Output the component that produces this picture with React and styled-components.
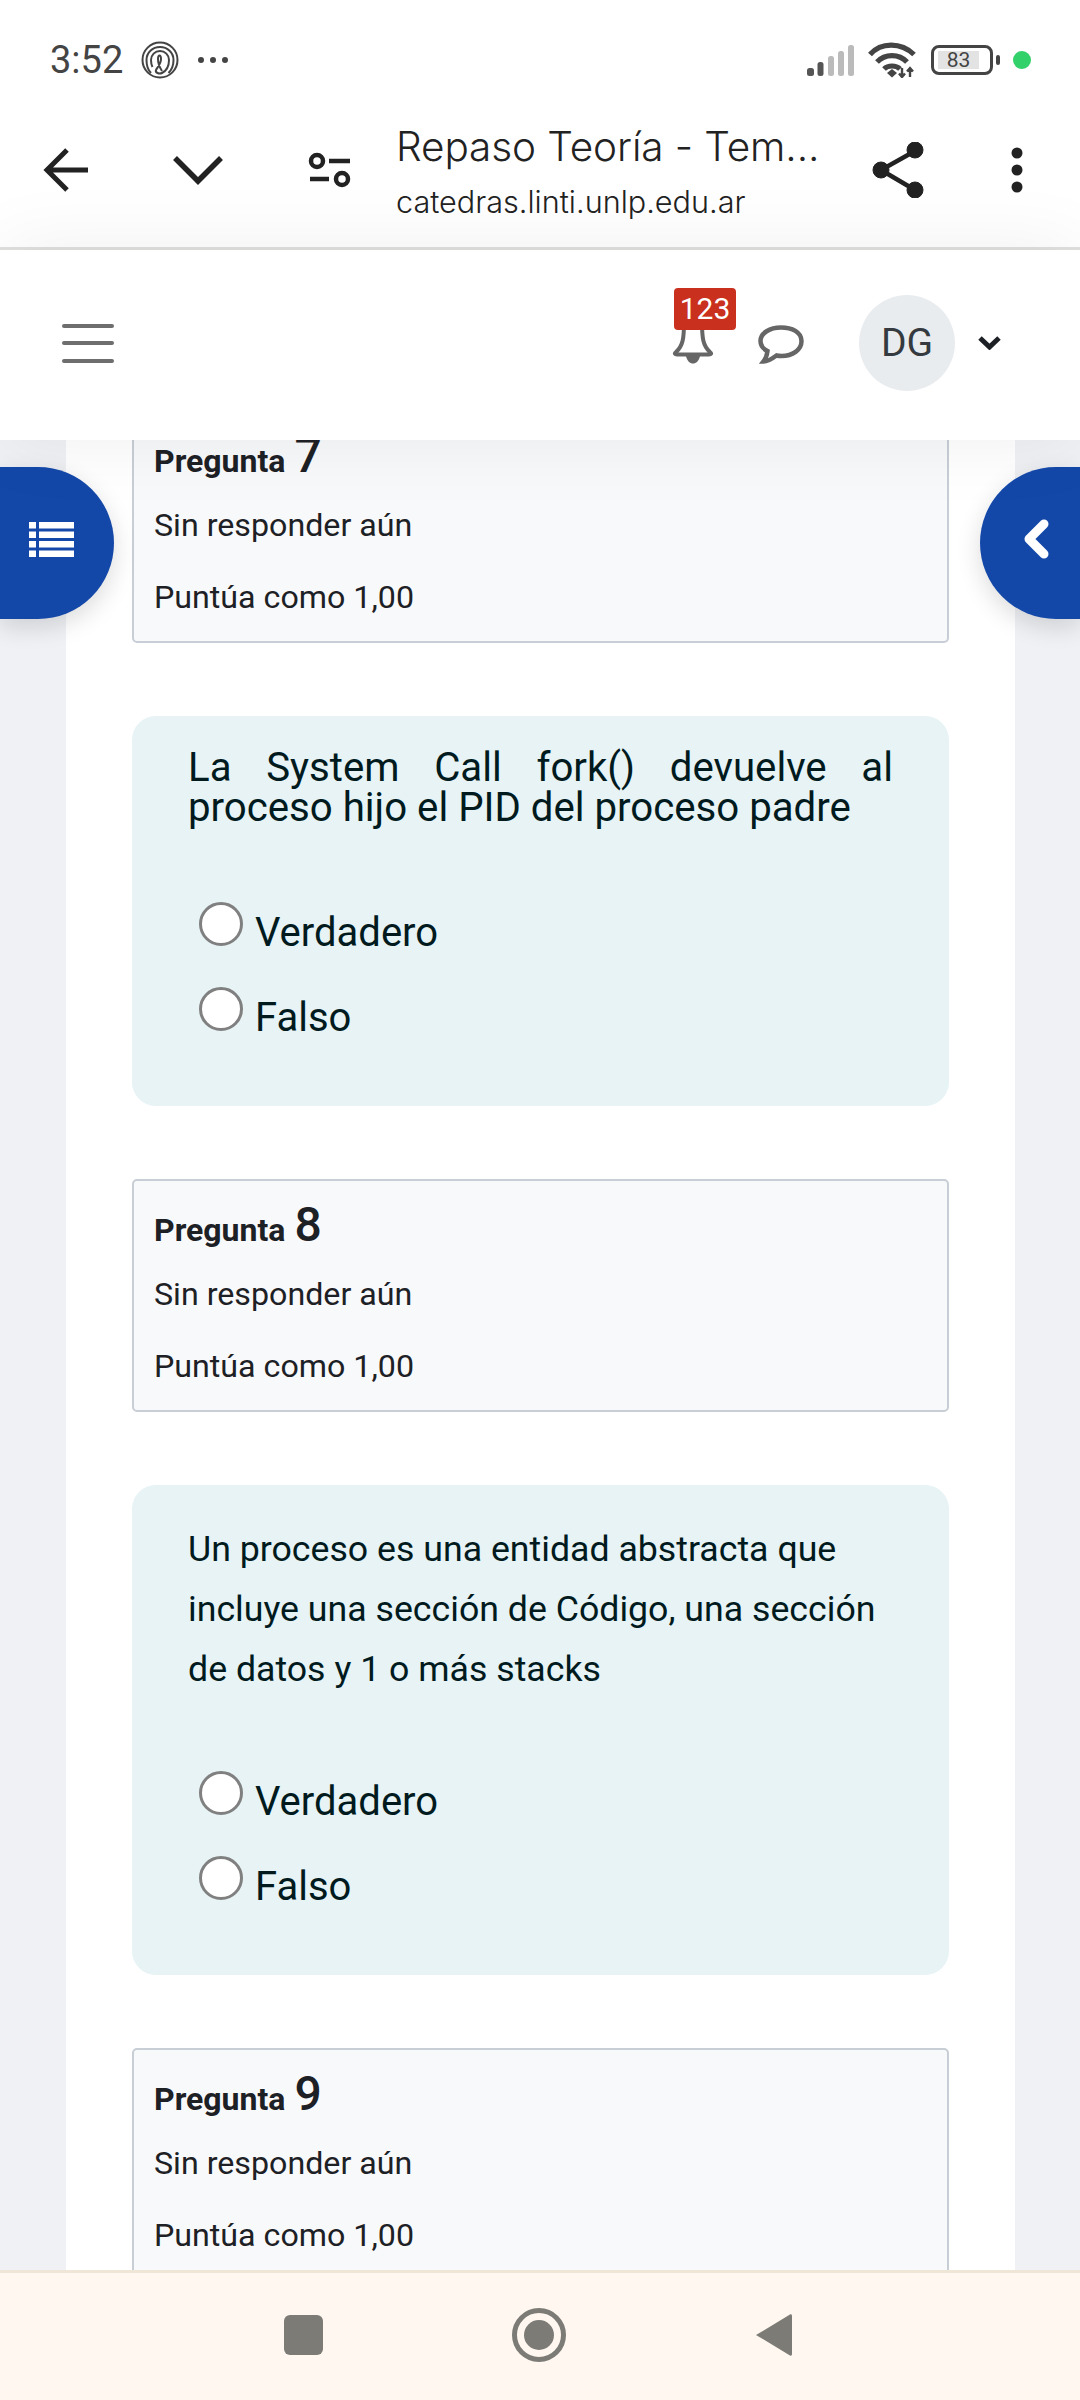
import React from "react";
import styled, { createGlobalStyle } from "styled-components";

const Global = createGlobalStyle`
  html, body { margin: 0; padding: 0; background: #fff; }
  * { box-sizing: border-box; }
`;

const Screen = styled.div`
  width: 1080px;
  height: 2400px;
  display: flex;
  flex-direction: column;
  overflow: hidden;
  font-family: Roboto, "Liberation Sans", sans-serif;
  background: #fff;
`;

/* ---------- status bar ---------- */
const StatusBar = styled.div`
  height: 93px;
  padding: 27px 49px 0 50px;
  display: flex;
  align-items: center;
  background: #fff;
`;
const Time = styled.span`
  font-size: 38px;
  color: #444;
  line-height: 1;
`;
const StatusLeft = styled.div`
  display: flex;
  align-items: center;
  gap: 18px;
`;
const StatusRight = styled.div`
  margin-left: auto;
  display: flex;
  align-items: center;
`;
const Battery = styled.div`
  position: relative;
  width: 62px;
  height: 30px;
  margin-left: 15px;
  border: 3px solid #444;
  border-radius: 8px;
  padding: 3px 11px 3px 4px;
  display: flex;
  &::after {
    content: "";
    position: absolute;
    right: -10px;
    top: 7px;
    width: 4px;
    height: 10px;
    border-radius: 2px;
    background: #444;
  }
`;
const BatteryFill = styled.div`
  flex: 1;
  background: #e3e3e3;
  color: #444;
  font-size: 21px;
  line-height: 18px;
  text-align: center;
`;
const GreenDot = styled.span`
  width: 18px;
  height: 18px;
  border-radius: 50%;
  background: #33d16a;
  margin-left: 20px;
`;

/* ---------- browser toolbar ---------- */
const Toolbar = styled.div`
  height: 157px;
  border-bottom: 3px solid #e0e0de;
  display: flex;
  align-items: center;
  background: #fff;
`;
const ToolCell = styled.div`
  width: ${(p) => p.$w || 132}px;
  height: 100%;
  flex: none;
  display: flex;
  align-items: center;
  justify-content: center;
`;
const TitleBlock = styled.div`
  flex: none;
  width: 436px;
  padding-top: 4px;
  display: flex;
  flex-direction: column;
  font-family: Inter, Roboto, sans-serif;
  color: #222;
`;
const PageTitle = styled.div`
  font-size: 40.5px;
  line-height: 48px;
  font-weight: 300;
  letter-spacing: -0.1px;
  white-space: nowrap;
`;
const PageUrl = styled.div`
  font-size: 30.6px;
  line-height: 40px;
  font-weight: 300;
  margin-top: 11px;
  white-space: nowrap;
`;

/* ---------- site navbar ---------- */
const Navbar = styled.div`
  position: relative;
  z-index: 3;
  height: 190px;
  padding: 0 79px 4px 62px;
  display: flex;
  align-items: center;
  background: #fff;
  box-shadow: 0 0 80px rgba(0, 0, 0, 0.065);
`;
const Burger = styled.div`
  width: 52px;
  height: 39px;
  display: flex;
  flex-direction: column;
  justify-content: space-between;
  span {
    display: block;
    height: 4px;
    border-radius: 2px;
    background: #6e6e6e;
  }
`;
const BellWrap = styled.div`
  position: relative;
  margin-left: auto;
  width: 42px;
  height: 44px;
  margin-top: -2px;
`;
const Badge = styled.span`
  position: absolute;
  left: 2px;
  top: -32px;
  width: 62px;
  height: 42px;
  border-radius: 4px;
  background: #c9301e;
  color: #fff;
  font-size: 30px;
  line-height: 42px;
  text-align: center;
`;
const ChatIcon = styled.svg`
  margin: 3px 0 0 44px;
  flex: none;
`;
const Avatar = styled.div`
  width: 96px;
  height: 96px;
  margin-left: 55px;
  border-radius: 50%;
  background: #e9ecef;
  color: #343a40;
  font-size: 39px;
  display: flex;
  align-items: center;
  justify-content: center;
`;
const CaretIcon = styled.svg`
  margin-left: 23px;
  flex: none;
`;

/* ---------- page ---------- */
const Main = styled.main`
  position: relative;
  flex: 1;
  min-height: 0;
  overflow: hidden;
  background: #eff1f5;
`;
const Column = styled.div`
  margin: -30px 65px 0 66px;
  padding: 0 66px 0 66px;
  background: #fff;
  display: flex;
  flex-direction: column;
  gap: 73px;
`;
const InfoCard = styled.section`
  flex: none;
  height: 233px;
  border: 2.5px solid #c8ced6;
  border-radius: 5px;
  background: #f8f9fa;
  padding: 0 20px;
  color: #1d2125;
`;
const InfoHead = styled.div`
  display: flex;
  align-items: baseline;
  gap: 9px;
  height: 61px;
  margin-bottom: 16px;
  font-size: 32px;
  font-weight: 700;
  line-height: 87px;
`;
const InfoNum = styled.span`
  font-size: 48px;
  font-weight: 500;
`;
const InfoLine = styled.div`
  font-size: 32.2px;
  line-height: 72px;
`;
const QuestionCard = styled.section`
  flex: none;
  border-radius: 24px;
  background: #e7f3f5;
  padding: ${(p) => p.$top}px 56px 58px;
  color: #001a1e;
`;
const QuestionText = styled.p`
  margin: 0 0 ${(p) => p.$after}px;
  font-size: ${(p) => p.$size}px;
  line-height: ${(p) => p.$lh}px;
  text-align: ${(p) => p.$align};
`;
const Options = styled.div`
  margin-left: 11px;
  display: flex;
  flex-direction: column;
  gap: 24px;
`;
const Option = styled.label`
  display: flex;
  align-items: flex-start;
  gap: 12px;
  font-size: 40px;
  line-height: 61px;
`;
const Radio = styled.span`
  flex: none;
  width: 44px;
  height: 44px;
  border-radius: 50%;
  border: 3px solid #808080;
  background: #fff;
`;

const SideButton = styled.button`
  position: absolute;
  top: 27px;
  height: 152px;
  padding: 0;
  border: none;
  background: #1348a9;
  box-shadow: 0 8px 24px rgba(0, 0, 0, 0.14);
  display: flex;
  align-items: center;
  ${(p) =>
    p.$side === "left"
      ? `left: 0; width: 114px; border-radius: 0 76px 76px 0; padding: 0 0 8px 29px;`
      : `right: 0; width: 100px; border-radius: 76px 0 0 76px; padding: 0 0 8px 43px;`}
`;

/* ---------- android nav ---------- */
const BottomNav = styled.nav`
  height: 130px;
  flex: none;
  position: relative;
  z-index: 3;
  border-top: 3px solid #efe6d8;
  background: #fff7f0;
  padding: 0 0 3px 284px;
  display: flex;
  align-items: center;
  gap: 189px;
`;
const NavSquare = styled.span`
  width: 39px;
  height: 40px;
  border-radius: 6px;
  background: #7c7b76;
`;

const data = {
  first: "La System Call fork() devuelve al proceso hijo el PID del proceso padre",
  second: "Un proceso es una entidad abstracta que incluye una sección de Código, una sección de datos y 1 o más stacks",
};

function Info({ n }) {
  return (
    <InfoCard>
      <InfoHead>
        Pregunta <InfoNum>{n}</InfoNum>
      </InfoHead>
      <InfoLine>Sin responder aún</InfoLine>
      <InfoLine>Puntúa como 1,00</InfoLine>
    </InfoCard>
  );
}

function Answers() {
  return (
    <Options>
      <Option><Radio />Verdadero</Option>
      <Option><Radio />Falso</Option>
    </Options>
  );
}

const Signal = () => (
  <svg width="50" height="32" viewBox="0 0 50 32">
    <rect x="1" y="24" width="7" height="8" rx="2.5" fill="#555" />
    <rect x="11.5" y="18" width="6" height="14" rx="2.5" fill="#555" />
    <rect x="22" y="12" width="6" height="20" rx="2.5" fill="#bbb" />
    <rect x="32" y="7" width="6" height="25" rx="2.5" fill="#bbb" />
    <rect x="42" y="1" width="6" height="31" rx="2.5" fill="#bbb" />
  </svg>
);

const Wifi = () => (
  <svg width="48" height="36" viewBox="0 0 48 36" style={{ marginLeft: 12 }}>
    <g fill="none" stroke="#444" strokeWidth="5.2">
      <path d="M2 12.5C13 0 33 0 46 12.5" />
      <path d="M9 20C17 11.500 31 11.500 39 20" />
      <path d="M16 27C20 23 28 23 32 27" />
    </g>
    <path d="M19 31l5-4 5 4-5 4.500z" fill="#444" />
    <path d="M34 26v9M31 31.500l3 3.500 3-3.500M42 35v-9M39 29.500l3-3.500 3 3.500" fill="none" stroke="#444" strokeWidth="2.400" />
  </svg>
);

const Fingerprint = () => (
  <svg width="38" height="38" viewBox="0 0 38 38" fill="none" stroke="#444" strokeWidth="2">
    <circle cx="19" cy="19" r="17.500" />
    <path d="M10 32C6 28 5.500 23 5.500 19 5.500 11.500 11.500 6 19 6s13.500 5.500 13.500 13c0 6-2 10-5 13" />
    <path d="M11.500 26c-1-2-1.500-4.500-1.500-7 0-5 4-9 9-9s9 4 9 9c0 6-3 11-7 13-3 1.500-7-.5-6-3 1.500-3 5-6 5-11 0-2-.5-3.500-1.500-3.500S17 16 17 18c0 4 2 9 4 12" />
  </svg>
);

export default function App() {
  return (
    <Screen>
      <Global />
      <StatusBar>
        <StatusLeft>
          <Time>3:52</Time>
          <Fingerprint />
          <svg width="32" height="8" viewBox="0 0 32 8">
            <circle cx="4" cy="4" r="3" fill="#444" />
            <circle cx="16" cy="4" r="3" fill="#444" />
            <circle cx="28" cy="4" r="3" fill="#444" />
          </svg>
        </StatusLeft>
        <StatusRight>
          <Signal />
          <Wifi />
          <Battery><BatteryFill>83</BatteryFill></Battery>
          <GreenDot />
        </StatusRight>
      </StatusBar>

      <Toolbar>
        <ToolCell>
          <svg width="46" height="46" viewBox="0 0 46 46" fill="none" stroke="#222" strokeWidth="5">
            <path d="M45 23H5M24 3L4 23l20 20" />
          </svg>
        </ToolCell>
        <ToolCell>
          <svg width="50" height="30" viewBox="0 0 50 30" fill="none" stroke="#222" strokeWidth="5.500">
            <path d="M2 3l23 23L48 3" />
          </svg>
        </ToolCell>
        <ToolCell>
          <svg width="44" height="36" viewBox="0 0 44 36" fill="none" stroke="#222" strokeWidth="4.500">
            <circle cx="9" cy="9" r="6" />
            <path d="M21 9h21M2 27h19" />
            <circle cx="34" cy="27" r="6" />
          </svg>
        </ToolCell>
        <TitleBlock>
          <PageTitle>Repaso Teoría - Tem...</PageTitle>
          <PageUrl>catedras.linti.unlp.edu.ar</PageUrl>
        </TitleBlock>
        <ToolCell>
          <svg width="54" height="56" viewBox="0 0 54 56" fill="#222" stroke="#222">
            <path d="M44 9L10 28l34 20" fill="none" strokeWidth="4.500" />
            <circle cx="44" cy="8" r="8" />
            <circle cx="10" cy="28" r="8" />
            <circle cx="44" cy="48" r="8" />
          </svg>
        </ToolCell>
        <ToolCell $w={106}>
          <svg width="12" height="46" viewBox="0 0 12 46" fill="#222">
            <circle cx="6" cy="6" r="5.500" />
            <circle cx="6" cy="23" r="5.500" />
            <circle cx="6" cy="40" r="5.500" />
          </svg>
        </ToolCell>
      </Toolbar>

      <Navbar>
        <Burger><span /><span /><span /></Burger>
        <BellWrap>
          <svg width="42" height="44" viewBox="0 0 42 44" fill="none">
            <path d="M12 2c0 16-1 24-8 30-2 1.500-1 2.500 1 2.500h32c2 0 3-1 1-2.500-7-6-8-14-8-30" stroke="#666" strokeWidth="4" />
            <path d="M14 36h14c-1 5-4 7.500-7 7.500s-6-2.500-7-7.500z" fill="#666" />
          </svg>
          <Badge>123</Badge>
        </BellWrap>
        <ChatIcon width="46" height="39" viewBox="0 0 46 39" fill="none">
          <path d="M23 2.500C12 2.500 2.500 8 2.500 16c0 5 3 8 7 10-.5 4-2 8-4 10.500 5 0 9-3 13-6 2 .5 3 .5 5 .5 11 0 20-6 20-15S34 2.500 23 2.500z" stroke="#666" strokeWidth="4.500" />
        </ChatIcon>
        <Avatar>DG</Avatar>
        <CaretIcon width="23" height="14" viewBox="0 0 23 14" fill="none" stroke="#1d2125" strokeWidth="5">
          <path d="M2 2l9.500 9L21 2" />
        </CaretIcon>
      </Navbar>

      <Main>
        <Column>
          <Info n="7" />
          <QuestionCard $top={32}>
            <QuestionText $size={40.2} $lh={40} $after={74} $align="justify">{data.first}</QuestionText>
            <Answers />
          </QuestionCard>
          <Info n="8" />
          <QuestionCard $top={34}>
            <QuestionText $size={35.7} $lh={60} $after={72} $align="left">{data.second}</QuestionText>
            <Answers />
          </QuestionCard>
          <Info n="9" />
        </Column>
        <SideButton $side="left" aria-label="Índice">
          <svg width="45" height="35" viewBox="0 0 45 35" fill="#fff">
            <path d="M0 0h7v6.500H0zM10 0h35v6.500H10zM0 9.500h7V16H0zM10 9.500h35V16H10zM0 19h7v6.500H0zM10 19h35v6.500H10zM0 28.500h7V35H0zM10 28.500h35V35H10z" />
          </svg>
        </SideButton>
        <SideButton $side="right" aria-label="Cerrar">
          <svg width="26" height="40" viewBox="0 0 26 40" fill="none" stroke="#fff" strokeWidth="9" strokeLinejoin="round" strokeLinecap="round">
            <path d="M21 5L6 20l15 15" />
          </svg>
        </SideButton>
      </Main>

      <BottomNav>
        <NavSquare />
        <svg width="54" height="54" viewBox="0 0 54 54">
          <circle cx="27" cy="27" r="24.500" fill="none" stroke="#7c7b76" strokeWidth="5" />
          <circle cx="27" cy="27" r="15" fill="#7c7b76" />
        </svg>
        <svg width="37" height="44" viewBox="0 0 37 44">
          <path d="M35 1.500L1 22l34 20.500c1 .5 2 0 2-1.500V3c0-1.500-1-2-2-1.500z" fill="#7c7b76" />
        </svg>
      </BottomNav>
    </Screen>
  );
}
